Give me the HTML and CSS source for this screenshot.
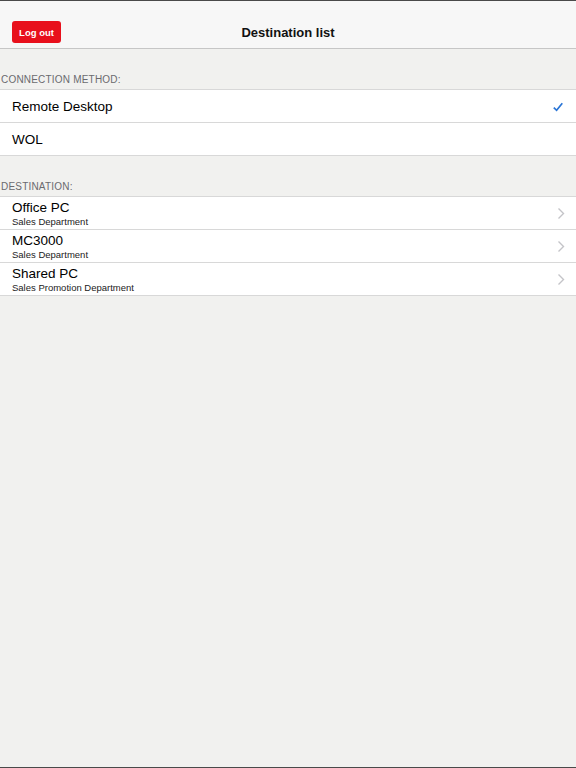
FILE: index.html
```html
<!DOCTYPE html>
<html lang="en">
<head>
    <meta charset="UTF-8">
    <meta name="viewport" content="width=device-width, initial-scale=1.0">
    <title>Destination list</title>
    <link rel="stylesheet" href="styles.css">
</head>
<body>
    <header class="nav-bar">
        <button type="button" class="logout-btn">Log out</button>
        <h1>Destination list</h1>
    </header>

    <!-- Connection method -->
    <div class="group">
        <div class="group-title">CONNECTION METHOD:</div>
        <ul class="list">
            <li class="row">
                <span class="row-title">Remote Desktop</span>
                <svg class="check" width="10" height="10" viewBox="0 0 10 10">
                    <path d="M0.8 5.6 L3.6 8.3 L9.3 1.3" fill="none" stroke="#2a75d6" stroke-width="1.7"/>
                </svg>
            </li>
            <li class="row">
                <span class="row-title">WOL</span>
            </li>
        </ul>
    </div>

    <!-- Destinations -->
    <div class="group">
        <div class="group-title">DESTINATION:</div>
        <ul class="list">
            <li class="row">
                <div class="row-text">
                    <span class="row-title">Office PC</span>
                    <span class="row-sub">Sales Department</span>
                </div>
                <svg class="chevron" width="8" height="13" viewBox="0 0 8 13">
                    <path d="M1.5 1.5 L6.5 6.5 L1.5 11.5" fill="none" stroke="#c4c4c8" stroke-width="1.4"/>
                </svg>
            </li>
            <li class="row">
                <div class="row-text">
                    <span class="row-title">MC3000</span>
                    <span class="row-sub">Sales Department</span>
                </div>
                <svg class="chevron" width="8" height="13" viewBox="0 0 8 13">
                    <path d="M1.5 1.5 L6.5 6.5 L1.5 11.5" fill="none" stroke="#c4c4c8" stroke-width="1.4"/>
                </svg>
            </li>
            <li class="row">
                <div class="row-text">
                    <span class="row-title">Shared PC</span>
                    <span class="row-sub">Sales Promotion Department</span>
                </div>
                <svg class="chevron" width="8" height="13" viewBox="0 0 8 13">
                    <path d="M1.5 1.5 L6.5 6.5 L1.5 11.5" fill="none" stroke="#c4c4c8" stroke-width="1.4"/>
                </svg>
            </li>
        </ul>
    </div>
</body>
</html>
```

FILE: styles.css
```css
html, body {
    margin: 0;
    padding: 0;
}
body {
    font-family: "Liberation Sans", Arial, sans-serif;
    background-color: #f1f1ef;
    color: #000;
    min-height: 100vh;
    box-sizing: border-box;
    border-top: 1px solid #4a4a4a;
    border-bottom: 1px solid #4a4a4a;
}
.nav-bar {
    position: relative;
    height: 48px;
    background: #f7f7f7;
    border-bottom: 1px solid #c6c6c6;
    display: flex;
    align-items: center;
    justify-content: center;
    padding-top: 15px;
    box-sizing: border-box;
}
.nav-bar h1 {
    margin: 0;
    font-size: 13px;
    font-weight: bold;
    color: #111;
}
.logout-btn {
    position: absolute;
    left: 12px;
    top: 20px;
    width: 49px;
    height: 22px;
    border: none;
    border-radius: 3px;
    background: #e8101c;
    color: #fff;
    font-family: inherit;
    font-size: 9.5px;
    font-weight: bold;
    padding: 0;
    cursor: pointer;
}
.group-title {
    height: 40px;
    box-sizing: border-box;
    padding: 25px 0 0 1px;
    font-size: 10px;
    letter-spacing: 0.2px;
    color: #6a6a6e;
}
.list {
    list-style: none;
    margin: 0;
    padding: 0;
    background: #fff;
    border-top: 1px solid #d8d8d8;
}
.row {
    height: 33px;
    box-sizing: border-box;
    border-bottom: 1px solid #d8d8d8;
    display: flex;
    align-items: center;
    justify-content: space-between;
    padding: 0 12px;
}
.row-title {
    font-size: 13.5px;
}
.row-text {
    display: flex;
    flex-direction: column;
    padding-top: 2px;
}
.row-text .row-title {
    line-height: 14px;
}
.row-sub {
    font-size: 9.5px;
    line-height: 13px;
    color: #222;
}
.check {
    margin-right: 1px;
    margin-top: 1px;
}
.chevron {
    margin-right: -1px;
}
```
